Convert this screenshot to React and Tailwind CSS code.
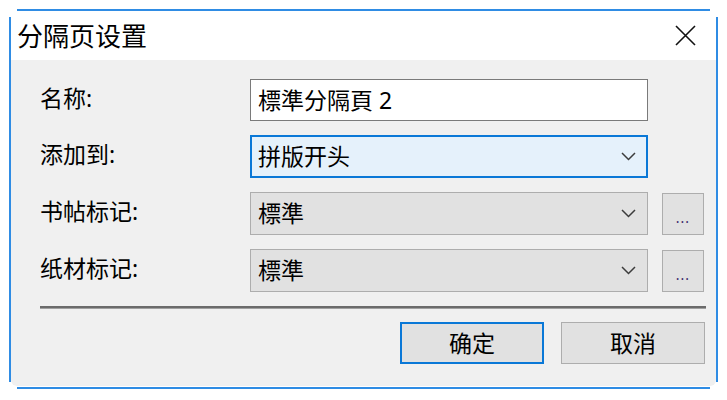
import React from "react";

function Chevron() {
  return (
    <svg width="15" height="9" viewBox="0 0 15 9" className="shrink-0">
      <path d="M1 1 L7.5 7.5 L14 1" fill="none" stroke="#3c3c3c" strokeWidth="1.5" />
    </svg>
  );
}

function Select({ value, active }) {
  return (
    <div
      className={
        "flex h-[43px] w-[398px] items-center justify-between " +
        (active
          ? "border-2 border-[#0a78d7] bg-[#e5f1fb] pl-[6px] pr-[10px]"
          : "border border-[#adadad] bg-[#e1e1e1] pl-[7px] pr-[11px]")
      }
    >
      <span>{value}</span>
      <Chevron />
    </div>
  );
}

function DotsButton() {
  return (
    <div className="ml-[14px] flex h-[42px] w-[42px] items-end justify-center border border-[#adadad] bg-[#e1e1e1] pb-[9px]">
      <span className="text-[14px] leading-none tracking-[1px] text-[#3a2a6a]">...</span>
    </div>
  );
}

function Row({ label, children }) {
  return (
    <div className="flex items-center">
      <div className="w-[210px] -translate-y-[2px]">{label}</div>
      {children}
    </div>
  );
}

export default function App() {
  return (
    <div className="relative h-[400px] w-[727px] overflow-hidden bg-white font-['Noto_Sans','Noto_Sans_CJK_SC',sans-serif] text-[23px] text-black">
      {/* window frame accent lines */}
      <div className="absolute left-[17px] top-[9px] h-[2px] w-[693px] bg-[#2f8ce4]" />
      <div className="absolute left-[9px] top-[17px] h-[365px] w-[2px] bg-[#2f8ce4]" />
      <div className="absolute left-[716px] top-[17px] h-[365px] w-[2px] bg-[#2f8ce4]" />
      <div className="absolute left-[17px] top-[387px] h-[2px] w-[693px] bg-[#2f8ce4]" />

      <div className="ml-[11px] mt-[11px] flex h-[375px] w-[705px] flex-col">
        {/* title bar */}
        <div className="flex h-[49px] items-center justify-between bg-white pl-[6px] pr-[20px]">
          <span className="text-[26px] leading-none">分隔页设置</span>
          <svg width="21" height="21" viewBox="0 0 21 21">
            <path d="M1 1 L20 20 M20 1 L1 20" stroke="#111" strokeWidth="1.6" fill="none" />
          </svg>
        </div>

        {/* body */}
        <div className="flex flex-1 flex-col rounded-b-[6px] bg-[#f0f0f0] pl-[29px] pr-[10px] pt-[19px]">
          <div className="flex flex-col gap-[14px]">
            <Row label="名称:">
              <div className="flex h-[42px] w-[398px] items-center border border-[#7a7a7a] bg-white pl-[7px]">
                標準分隔頁 2
              </div>
            </Row>
            <Row label="添加到:">
              <Select value="拼版开头" active />
            </Row>
            <Row label="书帖标记:">
              <Select value="標準" />
              <DotsButton />
            </Row>
            <Row label="纸材标记:">
              <Select value="標準" />
              <DotsButton />
            </Row>
          </div>

          <div className="mt-[14px] h-[3px] w-[666px] border-t-2 border-[#6b6b6b] bg-[#a0a0a0]" />

          <div className="mt-[13px] flex justify-end gap-[17px] pr-[1px]">
            <div className="flex h-[42px] w-[144px] items-center justify-center border-2 border-[#0a78d7] bg-[#e1e1e1]">
              确定
            </div>
            <div className="flex h-[42px] w-[144px] items-center justify-center border border-[#adadad] bg-[#e1e1e1]">
              取消
            </div>
          </div>
        </div>
      </div>
    </div>
  );
}
